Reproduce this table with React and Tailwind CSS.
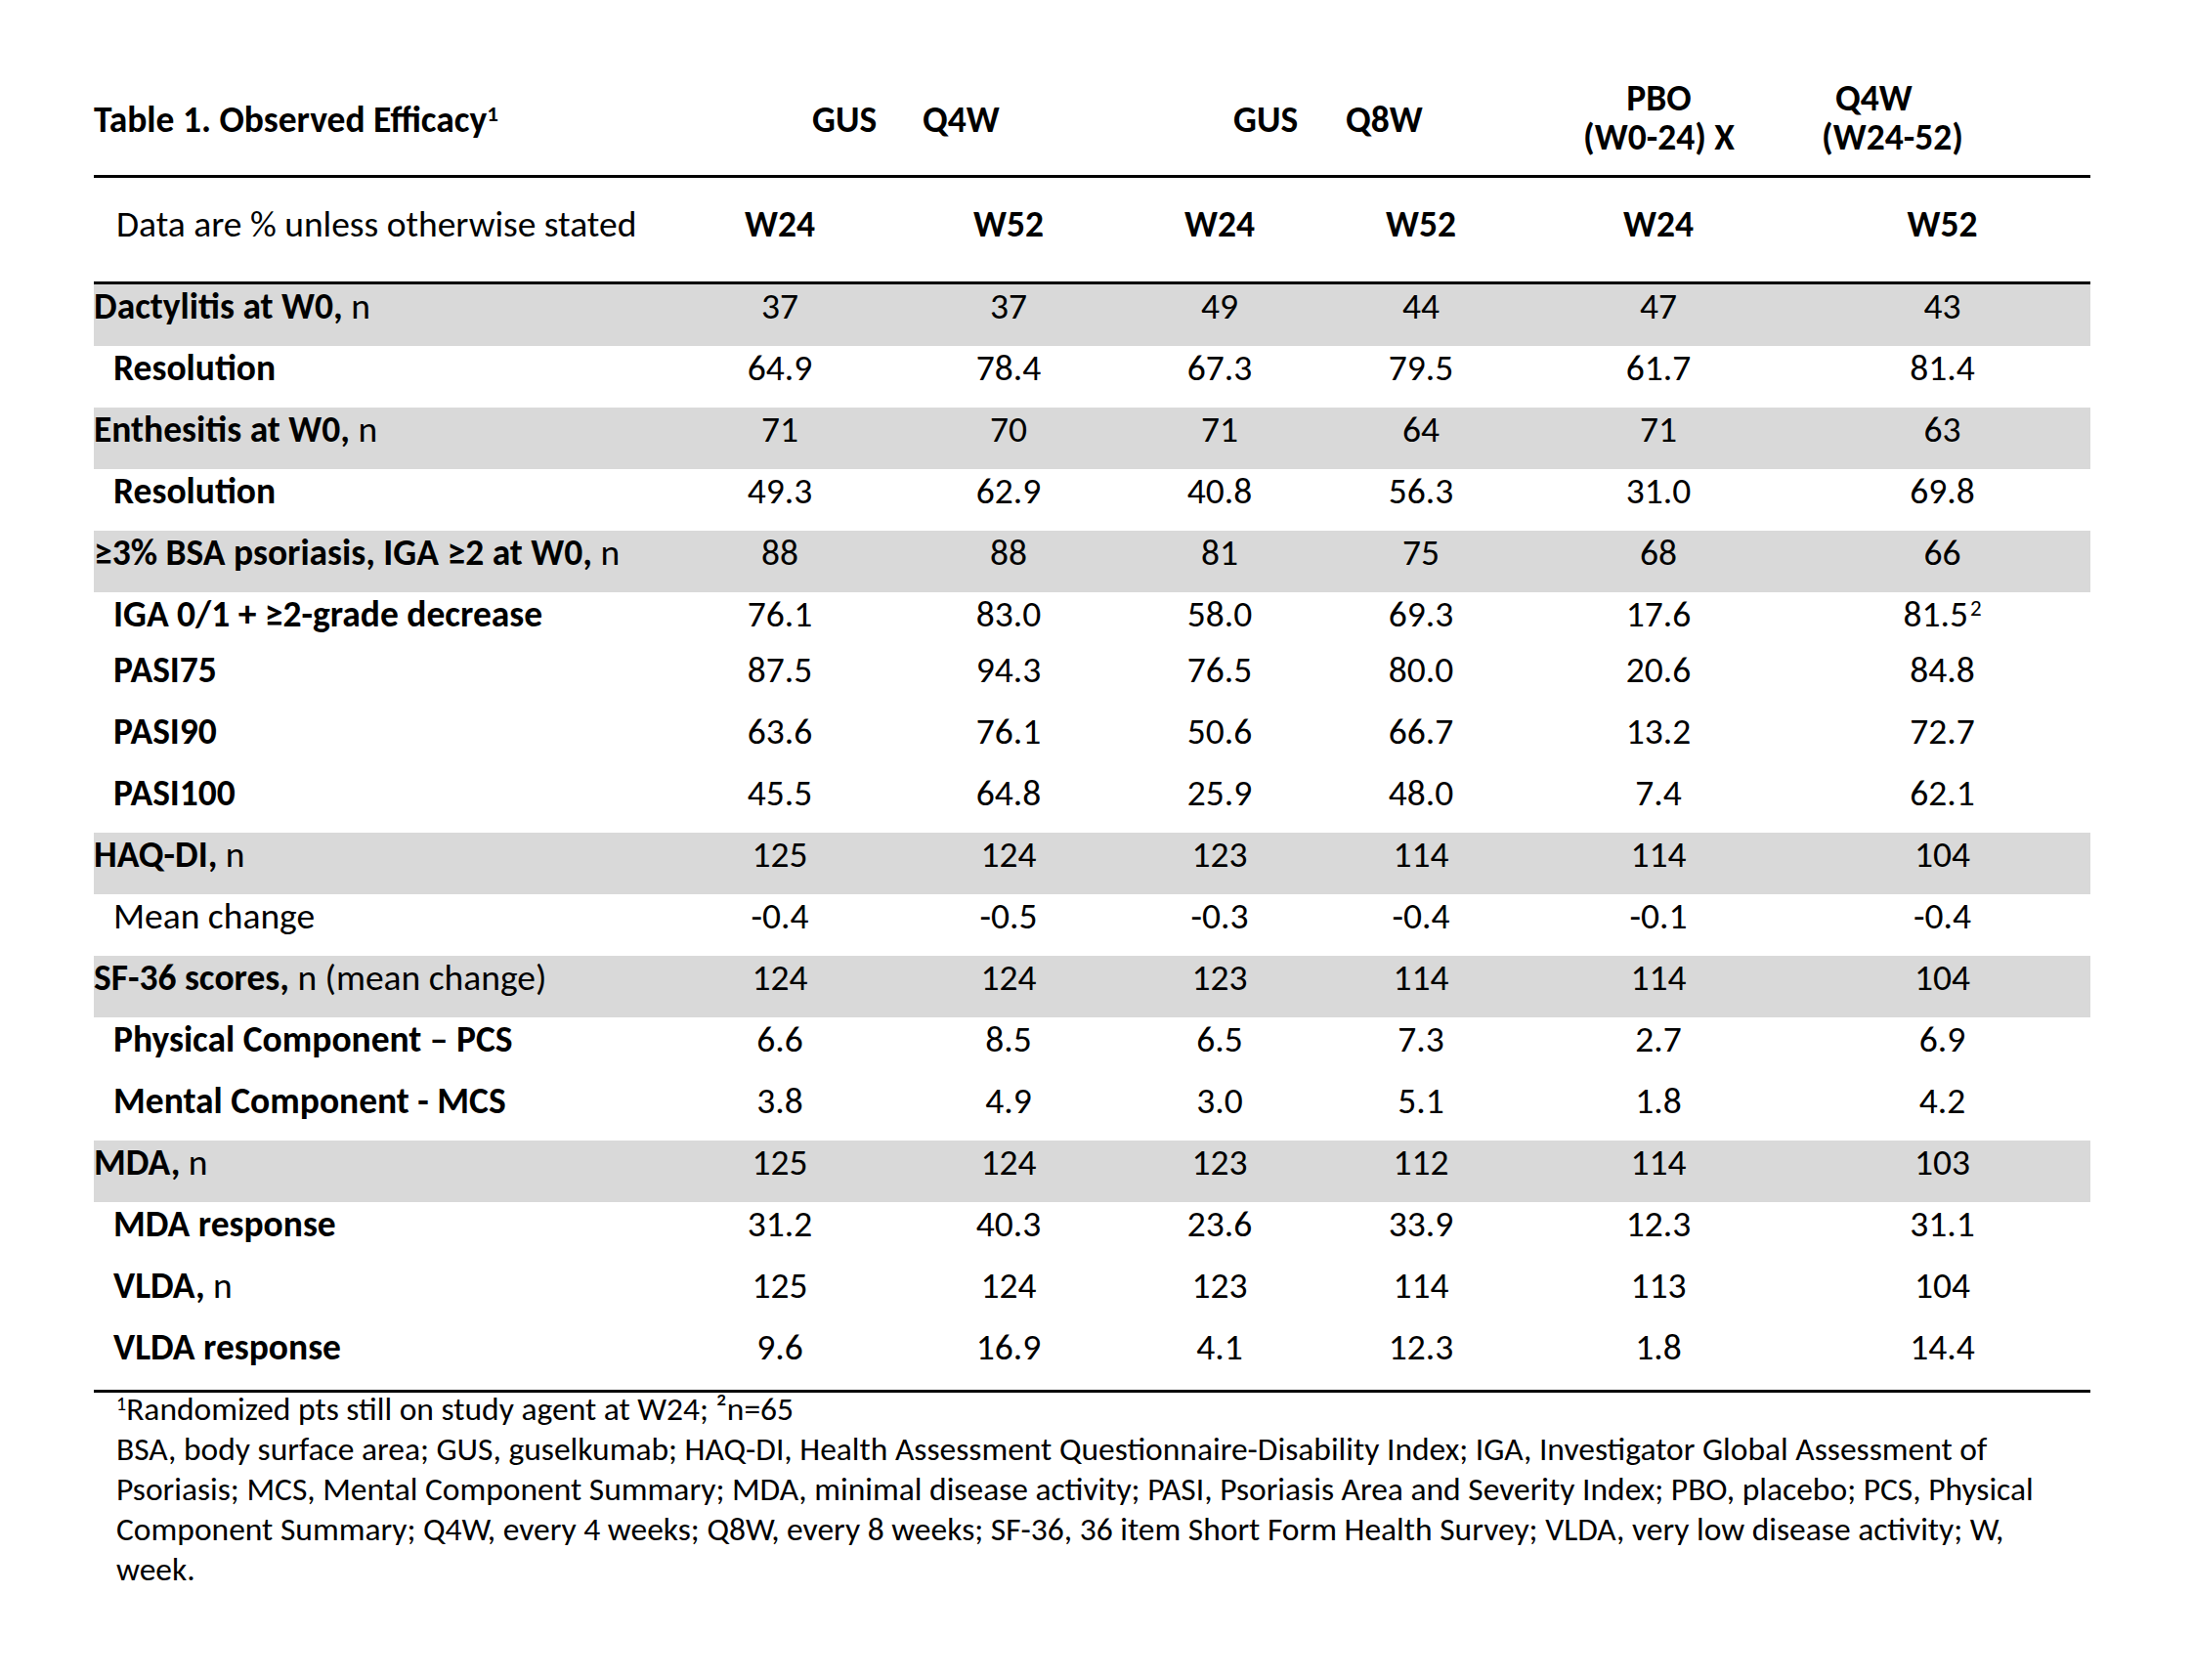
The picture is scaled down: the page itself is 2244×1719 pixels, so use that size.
const rows = [
  { label: 'Dactylitis at W0,', suffix: ' n', gray: true, values: ['37', '37', '49', '44', '47', '43'] },
  { label: 'Resolution', indent: true, values: ['64.9', '78.4', '67.3', '79.5', '61.7', '81.4'] },
  { label: 'Enthesitis at W0,', suffix: ' n', gray: true, values: ['71', '70', '71', '64', '71', '63'] },
  { label: 'Resolution', indent: true, values: ['49.3', '62.9', '40.8', '56.3', '31.0', '69.8'] },
  { label: '≥3% BSA psoriasis, IGA ≥2 at W0,', suffix: ' n', gray: true, values: ['88', '88', '81', '75', '68', '66'] },
  { label: 'IGA 0/1 + ≥2-grade decrease', indent: true, short: true, values: ['76.1', '83.0', '58.0', '69.3', '17.6', '81.5'], sup: '2' },
  { label: 'PASI75', indent: true, values: ['87.5', '94.3', '76.5', '80.0', '20.6', '84.8'] },
  { label: 'PASI90', indent: true, values: ['63.6', '76.1', '50.6', '66.7', '13.2', '72.7'] },
  { label: 'PASI100', indent: true, values: ['45.5', '64.8', '25.9', '48.0', '7.4', '62.1'] },
  { label: 'HAQ-DI,', suffix: ' n', gray: true, values: ['125', '124', '123', '114', '114', '104'] },
  { label: 'Mean change', indent: true, plain: true, values: ['-0.4', '-0.5', '-0.3', '-0.4', '-0.1', '-0.4'] },
  { label: 'SF-36 scores,', suffix: ' n (mean change)', gray: true, values: ['124', '124', '123', '114', '114', '104'] },
  { label: 'Physical Component – PCS', indent: true, values: ['6.6', '8.5', '6.5', '7.3', '2.7', '6.9'] },
  { label: 'Mental Component - MCS', indent: true, values: ['3.8', '4.9', '3.0', '5.1', '1.8', '4.2'] },
  { label: 'MDA,', suffix: ' n', gray: true, values: ['125', '124', '123', '112', '114', '103'] },
  { label: 'MDA response', indent: true, values: ['31.2', '40.3', '23.6', '33.9', '12.3', '31.1'] },
  { label: 'VLDA,', suffix: ' n', indent: true, values: ['125', '124', '123', '114', '113', '104'] },
  { label: 'VLDA response', indent: true, last: true, values: ['9.6', '16.9', '4.1', '12.3', '1.8', '14.4'] },
];

const cols = 'grid grid-cols-[582px_240px_228px_204px_208px_278px_303px]';

function Row({ row }) {
  const height = row.short ? 'h-[57px]' : row.last ? 'h-[66px]' : 'h-[63px]';
  return (
    <div className={`${cols} ${height} ${row.gray ? 'bg-[#d9d9d9]' : ''} items-start leading-[44px]`}>
      <div className={`${row.indent ? 'pl-[20px]' : ''} whitespace-nowrap`}>
        <span className={row.plain ? '' : 'font-bold'}>{row.label}</span>
        {row.suffix ? <span>{row.suffix}</span> : null}
      </div>
      {row.values.map((v, i) => (
        <div key={i} className="text-center">
          {v}
          {row.sup && i === 5 ? <sup className="text-[23px] ml-[2px]">{row.sup}</sup> : null}
        </div>
      ))}
    </div>
  );
}

export default function App() {
  return (
    <div className="w-[2244px] min-h-[1719px] bg-white text-black text-[37.5px] pt-[80px] pl-[96px]" style={{ fontFamily: 'Carlito, Calibri, "Liberation Sans Narrow", "Open Sans", sans-serif' }}>
      <div className="w-[2043px]">
        <div className={`${cols} h-[99px] font-bold leading-[40px]`}>
          <div className="pt-[22px] whitespace-nowrap">Table 1. Observed Efficacy<sup className="text-[23px]">1</sup></div>
          <div className="col-span-2 flex gap-[47px] pl-[153px] pt-[22px]">
            <span>GUS</span><span>Q4W</span>
          </div>
          <div className="col-span-2 flex gap-[49px] pl-[116px] pt-[22px]">
            <span>GUS</span><span>Q8W</span>
          </div>
          <div className="col-span-2 flex pl-[62px]">
            <div className="flex flex-col items-center">
              <span>PBO</span>
              <span>(W0-24) X</span>
            </div>
            <div className="flex flex-col ml-[89px]">
              <span className="pl-[14px]">Q4W</span>
              <span>(W24-52)</span>
            </div>
          </div>
        </div>
        <div className="border-t-[3px] border-black" />
        <div className={`${cols} h-[106px] items-center pb-[12px]`}>
          <div className="pl-[23px] whitespace-nowrap">Data are % unless otherwise stated</div>
          {['W24', 'W52', 'W24', 'W52', 'W24', 'W52'].map((w, i) => (
            <div key={i} className="text-center font-bold">{w}</div>
          ))}
        </div>
        <div className="border-t-[3px] border-black" />
        {rows.map((r, i) => <Row key={i} row={r} />)}
        <div className="border-t-[3px] border-black" />
      </div>
      <div className="pl-[23px] -mt-[4px] text-[33.5px] leading-[41px] w-[2000px]">
        <p><sup className="text-[20px]">1</sup>Randomized pts still on study agent at W24; ²n=65</p>
        <p>BSA, body surface area; GUS, guselkumab; HAQ-DI, Health Assessment Questionnaire-Disability Index; IGA, Investigator Global Assessment of Psoriasis; MCS, Mental Component Summary; MDA, minimal disease activity; PASI, Psoriasis Area and Severity Index; PBO, placebo; PCS, Physical Component Summary; Q4W, every 4 weeks; Q8W, every 8 weeks; SF-36, 36 item Short Form Health Survey; VLDA, very low disease activity; W, week.</p>
      </div>
    </div>
  );
}
